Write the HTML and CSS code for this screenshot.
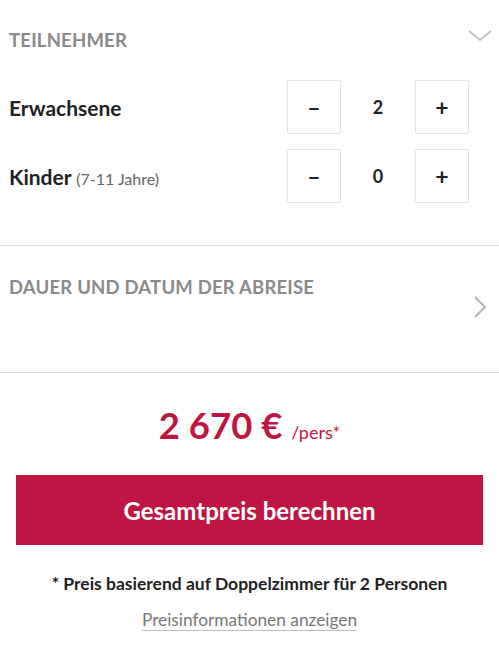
FILE: index.html
```html
<!DOCTYPE html>
<html lang="de">
<head>
    <meta charset="UTF-8">
    <meta name="viewport" content="width=device-width, initial-scale=1.0">
    <title>Teilnehmer</title>
    <link rel="stylesheet" href="styles.css">
</head>
<body>
    <!-- Teilnehmer -->
    <div class="section participants">
        <div class="section-head">
            <span class="section-title">TEILNEHMER</span>
            <svg class="chevron-down" width="24" height="12" viewBox="0 0 24 12">
                <polyline points="1,1 12,10 23,1" fill="none" stroke="#c4c4c4" stroke-width="2"/>
            </svg>
        </div>

        <div class="counter-row">
            <div class="counter-label">Erwachsene</div>
            <div class="counter">
                <button class="counter-btn">&ndash;</button>
                <span class="counter-value">2</span>
                <button class="counter-btn">+</button>
            </div>
        </div>

        <div class="counter-row">
            <div class="counter-label">Kinder <span class="counter-hint">(7-11 Jahre)</span></div>
            <div class="counter">
                <button class="counter-btn">&ndash;</button>
                <span class="counter-value">0</span>
                <button class="counter-btn">+</button>
            </div>
        </div>
    </div>

    <!-- Dauer und Datum -->
    <div class="section travel-date">
        <span class="section-title">DAUER UND DATUM DER ABREISE</span>
        <svg class="chevron-right" width="13" height="22" viewBox="0 0 13 22">
            <polyline points="1,1 11,11 1,21" fill="none" stroke="#b5b5b5" stroke-width="2"/>
        </svg>
    </div>

    <!-- Preis -->
    <div class="price-box">
        <div class="price">2 670 € <span class="price-unit">/pers*</span></div>
        <button class="calc-btn">Gesamtpreis berechnen</button>
        <p class="price-note">* Preis basierend auf Doppelzimmer für 2 Personen</p>
        <a class="price-link" href="#">Preisinformationen anzeigen</a>
    </div>
</body>
</html>
```

FILE: styles.css
```css
body {
    margin: 0;
    font-family: Lato, "Noto Sans", sans-serif;
    color: #222;
    background-color: #fff;
}

.section {
    border-bottom: 1px solid #dcdcdc;
}

.section-title {
    font-size: 18.5px;
    font-weight: bold;
    color: #8a8a8a;
    letter-spacing: 0.2px;
}

/* Teilnehmer */
.participants {
    padding: 0 0 42px 9px;
}

.section-head {
    height: 80px;
    display: flex;
    justify-content: space-between;
    align-items: center;
    padding-right: 7px;
}

.chevron-down {
    margin-bottom: 8px;
}

.counter-row {
    display: flex;
    justify-content: space-between;
    align-items: center;
    height: 54px;
    padding-right: 30px;
}

.counter-row + .counter-row {
    margin-top: 15px;
}

.counter-label {
    font-size: 21px;
    font-weight: bold;
}

.counter-hint {
    font-size: 16px;
    font-weight: normal;
    color: #666;
}

.counter {
    display: flex;
    align-items: center;
}

.counter-btn {
    width: 54px;
    height: 54px;
    border: 1px solid #e3e3e3;
    border-radius: 2px;
    background-color: #fff;
    font-family: inherit;
    font-size: 23px;
    font-weight: bold;
    color: #222;
    padding: 0;
}

.counter-value {
    width: 74px;
    text-align: center;
    font-size: 18px;
    font-weight: bold;
}

/* Dauer und Datum */
.travel-date {
    height: 127px;
    box-sizing: border-box;
    padding: 30px 12px 0 9px;
    display: flex;
    justify-content: space-between;
    align-items: flex-start;
}

.chevron-right {
    margin-top: 20px;
}

/* Preis */
.price-box {
    padding: 30px 16px 0 16px;
    text-align: center;
}

.price {
    font-size: 36.5px;
    font-weight: bold;
    color: #be1543;
}

.price-unit {
    font-size: 18px;
    font-weight: normal;
}

.calc-btn {
    display: block;
    width: 100%;
    height: 70px;
    margin-top: 28px;
    border: none;
    background-color: #be1543;
    color: #fff;
    font-family: inherit;
    font-size: 24px;
    font-weight: bold;
}

.price-note {
    margin: 28px 0 0 0;
    font-size: 17.5px;
    font-weight: bold;
}

.price-link {
    display: inline-block;
    margin-top: 15px;
    font-size: 17.3px;
    color: #777;
    text-decoration: none;
    border-bottom: 1px solid #bbb;
}
```
